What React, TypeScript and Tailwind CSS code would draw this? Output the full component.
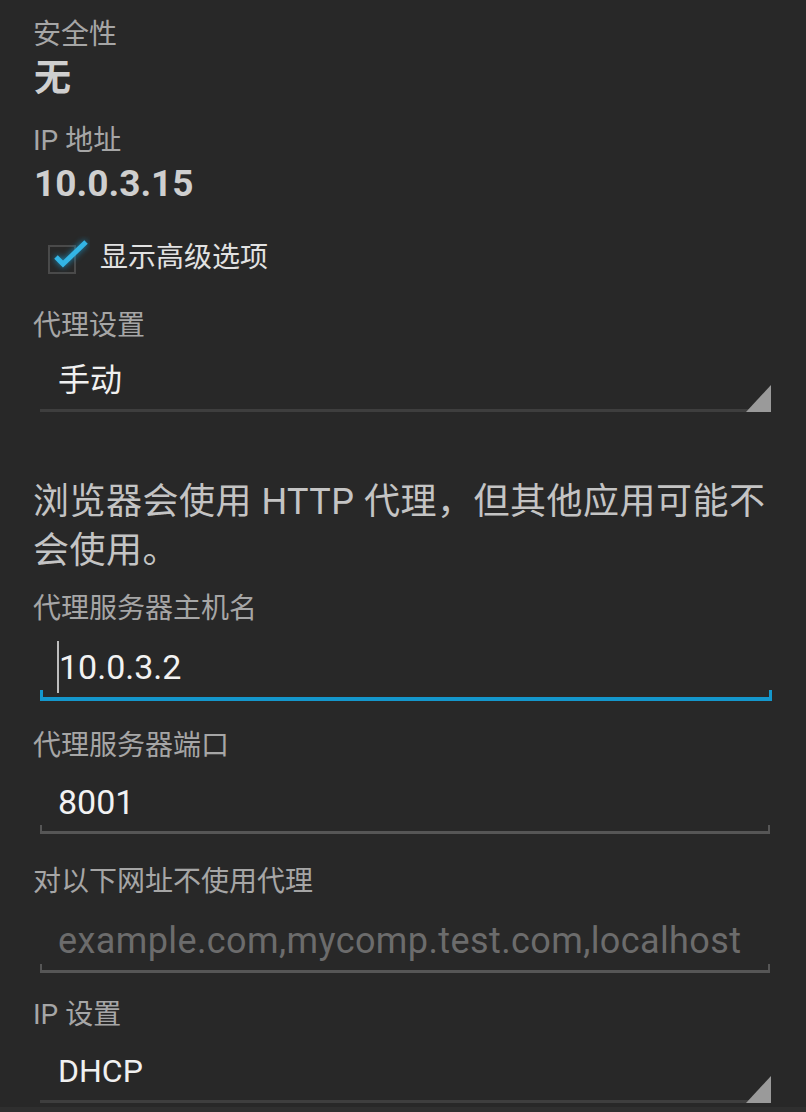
const FONT = "font-['Roboto','Noto_Sans_CJK_SC',sans-serif]";

function Label({ text, className = "" }: { text: string; className?: string }) {
  return (
    <div className={`h-[36px] pl-[33px] text-[28px] leading-[36px] text-[#a6a6a6] ${className}`}>
      {text}
    </div>
  );
}

function Value({ text, className = "" }: { text: string; className?: string }) {
  return (
    <div className={`h-[44px] pl-[34px] text-[37px] font-bold leading-[44px] text-[#cfcfcf] ${className}`}>
      {text}
    </div>
  );
}

function Spinner({ text, className = "" }: { text: string; className?: string }) {
  return (
    <div className={`relative pl-[40px] pr-[35px] ${className}`}>
      <div className="h-[44px] pl-[18px] text-[32px] leading-[44px] text-[#f0f0f0]">{text}</div>
      <div className="mt-[7px] h-[3px] bg-[#3e3e3e]" />
      {/* corner triangle */}
      <svg
        className="absolute bottom-0 right-[35px]"
        width="25"
        height="27"
        viewBox="0 0 25 27"
      >
        <polygon points="25,0 25,27 0,27" fill="#9a9a9a" />
      </svg>
    </div>
  );
}

function EditField({
  text,
  focused = false,
  placeholder = false,
  className = "",
}: {
  text: string;
  focused?: boolean;
  placeholder?: boolean;
  className?: string;
}) {
  return (
    <div className={`pl-[40px] ${focused ? "pr-[34px]" : "pr-[36px]"} ${className}`}>
      <div className="flex h-[44px] items-center pl-[17px]">
        {focused && <span className="inline-block h-[52px] w-[2px] bg-[#bdbdbd]" />}
        <span
          className={`leading-[44px] ${
            placeholder
              ? "text-[36px] tracking-[0.4px] text-[#6c6c6c]"
              : "text-[34px] text-[#f2f2f2]"
          } ${focused ? "" : "pl-[1px]"}`}
        >
          {text}
        </span>
      </div>
      {focused ? (
        <div className="mt-[1px] h-[11px] border-x-[3px] border-b-[4px] border-[#1497cc]" />
      ) : (
        <div className="mt-[1px] h-[9px] border-x-[2px] border-b-[3px] border-[#565656]" />
      )}
    </div>
  );
}

export default function App() {
  return (
    <div className={`flex h-[1112px] w-[806px] flex-col overflow-hidden bg-[#282828] ${FONT}`}>
      <div className="pt-[17px]">
        <Label text="安全性" />
        <Value text="无" className="mt-[4px]" />
        <Label text="IP 地址" className="mt-[22px]" />
        <Value text="10.0.3.15" className="mt-[3px]" />

        {/* advanced options checkbox */}
        <div className="mt-[30px] flex h-[44px] items-center pl-[44px]">
          <svg width="46" height="44" viewBox="0 0 46 44">
            <rect x="5" y="10" width="26" height="27" fill="none" stroke="#4a4a4a" strokeWidth="2" />
            <polyline
              points="12,21 19,28 42,6"
              fill="none"
              stroke="#33b5e5"
              strokeWidth="5"
              className="drop-shadow-[0_0_3px_#1a8fbf]"
            />
          </svg>
          <span className="ml-[10px] text-[28px] leading-[44px] text-[#e2e2e2]">显示高级选项</span>
        </div>

        <Label text="代理设置" className="mt-[28px]" />
        <Spinner text="手动" className="mt-[14px]" />

        <p className="mt-[66px] pl-[33px] pr-[28px] text-[36px] leading-[49px] tracking-[0.5px] text-[#c4c4c4]">
          浏览器会使用 HTTP 代理，但其他应用可能不会使用。
        </p>

        <Label text="代理服务器主机名" className="mt-[15px]" />
        <EditField text="10.0.3.2" focused className="mt-[18px]" />

        <Label text="代理服务器端口" className="mt-[27px]" />
        <EditField text="8001" className="mt-[16px]" />

        <Label text="对以下网址不使用代理" className="mt-[30px]" />
        <EditField
          text="example.com,mycomp.test.com,localhost"
          placeholder
          className="mt-[19px]"
        />

        <Label text="IP 设置" className="mt-[24px]" />
        <Spinner text="DHCP" className="mt-[16px]" />
      </div>

      {/* top edge of the next row */}
      <div className="mt-[4px] flex h-[10px] justify-center bg-[#2f2f2f] pt-[5px]">
        <span className="h-[2px] w-[1px] bg-[#555]" />
      </div>
    </div>
  );
}
